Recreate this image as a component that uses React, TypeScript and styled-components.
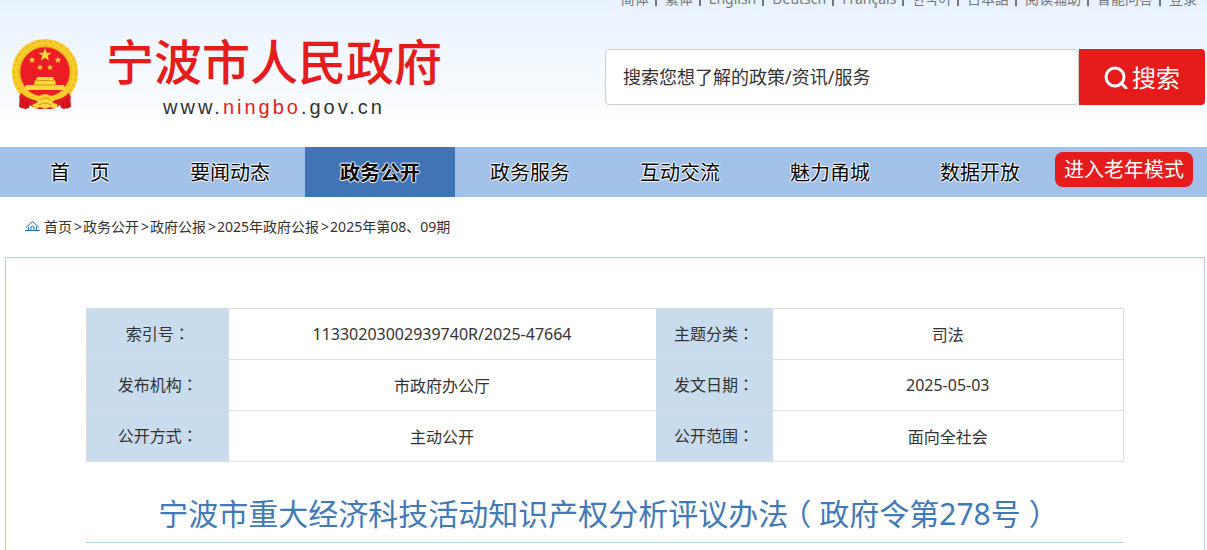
import React from 'react';
import styled, { createGlobalStyle } from 'styled-components';

const GlobalStyle = createGlobalStyle`
  * { box-sizing: border-box; }
  body {
    margin: 0;
    background: #fff;
    color: #333;
    font-family: "Noto Sans", "Noto Sans CJK SC", "Noto Sans CJK KR", sans-serif;
    font-size: 14px;
  }
  a { color: inherit; text-decoration: none; }
  ul, ol { margin: 0; padding: 0; list-style: none; }
`;

const Header = styled.header`
  height: 147px;
  background: linear-gradient(#e8f2ff 0, #fbfdff 114px, #fff 115px);
`;

const TopBar = styled.nav`
  display: flex;
  justify-content: flex-end;
  align-items: flex-end;
  height: 9px;
  padding-right: 10px;
  overflow: hidden;
`;

const TopList = styled.ul`
  display: flex;
  align-items: center;
  color: #777;
  line-height: 20px;
`;

const TopItem = styled.li`
  display: flex;
  align-items: center;
  white-space: nowrap;
  & + &::before {
    content: "";
    width: 2px;
    height: 14px;
    margin: 0 8px 0 6px;
    background: #777;
  }
`;

const Masthead = styled.div`
  display: flex;
  justify-content: space-between;
  gap: 24px;
  padding: 28px 2px 0 11px;
`;

const Brand = styled.a`
  display: flex;
  gap: 27px;
`;

const Emblem = styled.svg`
  flex: none;
  width: 68px;
  height: 76px;
`;

const BrandText = styled.div`
  display: flex;
  flex-direction: column;
  align-items: center;
  white-space: nowrap;
`;

const SiteName = styled.div`
  color: #e61b1b;
  font-family: "Noto Sans CJK SC", sans-serif;
  font-size: 48px;
  font-weight: 500;
  line-height: 44px;
`;

const SiteUrl = styled.div`
  margin-top: 8px;
  color: #333;
  font-family: "Liberation Sans", Arial, sans-serif;
  font-size: 20px;
  letter-spacing: 3px;
  line-height: 36px;
  span { color: #e61b1b; }
`;

const SearchForm = styled.form`
  display: flex;
  flex: 0 1 600px;
  height: 56px;
  margin-top: 12px;
`;

const SearchInput = styled.input`
  flex: 1;
  min-width: 0;
  padding: 0 17px;
  border: 1px solid #ccc;
  border-radius: 4px;
  background: #fff;
  font: inherit;
  font-size: 18px;
  outline: none;
  &::placeholder { color: #333; opacity: 1; }
`;

const SearchButton = styled.button`
  display: flex;
  align-items: center;
  justify-content: center;
  gap: 4px;
  width: 126px;
  padding: 0 0 2px;
  border: 0;
  border-radius: 0 4px 4px 0;
  background: #e61b1b;
  color: #fff;
  font: inherit;
  font-size: 24px;
`;

const SearchIcon = styled.svg`
  margin-top: 2px;
`;

const NavBar = styled.nav`
  display: flex;
  height: 50px;
  padding-left: 5px;
  background: #a2c1e9;
`;

const NavList = styled.ul`
  display: flex;
`;

const NavLink = styled.a<{ $active?: boolean }>`
  display: block;
  width: 150px;
  height: 50px;
  background: ${(p) => (p.$active ? '#4174b5' : 'transparent')};
  color: #000;
  font-size: 20px;
  font-weight: ${(p) => (p.$active ? 700 : 400)};
  line-height: 52px;
  text-align: center;
  white-space: pre;
  text-shadow: 1px 0 1px #fff, -1px 0 1px #fff, 0 1px 1px #fff, 0 -1px 1px #fff;
`;

const SeniorButton = styled.button`
  height: 35px;
  margin-top: 5px;
  padding: 0 9px;
  border: 0;
  border-radius: 8px;
  background: #e61b1b;
  color: #fff;
  font: inherit;
  font-size: 20px;
  line-height: 36px;
  white-space: nowrap;
`;

const Breadcrumb = styled.nav`
  display: flex;
  align-items: center;
  gap: 4px;
  height: 60px;
  padding: 0 0 2px 25px;
`;

const CrumbList = styled.ol`
  display: flex;
`;

const Crumb = styled.li`
  & + &::before { content: ">"; margin: 0 1px 0 2px; }
`;

const Article = styled.main`
  margin: 0 2px 0 5px;
  padding: 50px 80px 40px;
  border: 1px solid #b5cbe6;
`;

const InfoTable = styled.table`
  width: 100%;
  border: 1px solid #ddd;
  border-collapse: collapse;
  table-layout: fixed;
  font-size: 16px;
`;

const LabelCell = styled.th`
  height: 51px;
  padding: 0 0 2px;
  border-bottom: 1px solid #ddd;
  background: #c8dced;
  font-weight: 400;
`;

const ValueCell = styled.td`
  padding: 0 0 1px;
  border-bottom: 1px solid #ddd;
  text-align: center;
`;

const Col = styled.col<{ $width?: string }>`
  width: ${(p) => p.$width ?? 'auto'};
`;

const Title = styled.h1`
  margin: 0;
  padding: 30px 0 8px;
  border-bottom: 1px solid #b9d3e6;
  color: #4279b8;
  font-size: 30px;
  font-weight: 400;
  line-height: 40px;
  text-align: center;
`;

/* Full-width colon centred in its cell */
const Colon = styled.span`
  font-family: "Noto Sans CJK TC", sans-serif;
`;

/* Full-width bracket with its blank half shared between both sides */
const Bracket = styled.span`
  padding: 0 8px;
  font-family: "Noto Sans CJK SC", sans-serif;
  font-feature-settings: "halt";
`;

const languages = ['简体', '繁体', 'English', 'Deutsch', 'Français', '한국어', '日本語', '阅读辅助', '智能问答', '登录'];
const sections = ['首　页', '要闻动态', '政务公开', '政务服务', '互动交流', '魅力甬城', '数据开放'];
const crumbs = ['首页', '政务公开', '政府公报', '2025年政府公报', '2025年第08、09期'];
const info = [
  ['索引号', '11330203002939740R/2025-47664', '主题分类', '司法'],
  ['发布机构', '市政府办公厅', '发文日期', '2025-05-03'],
  ['公开方式', '主动公开', '公开范围', '面向全社会'],
];

const star = (cx: number, cy: number, r: number) =>
  Array.from({ length: 10 }, (_, i) => {
    const a = (Math.PI / 5) * i - Math.PI / 2;
    const d = i % 2 ? r * 0.4 : r;
    return `${(cx + d * Math.cos(a)).toFixed(2)},${(cy + d * Math.sin(a)).toFixed(2)}`;
  }).join(' ');

const NationalEmblem = () => (
  <Emblem viewBox="0 0 68 76" aria-hidden="true">
    <path d="M9 54l-1 16q5 3 10 1l1-3q5 4 10 4h10q5 0 10-4l1 3q5 2 10-1l-1-16z" fill="#df1820" />
    <path d="M34 2C15 2 1 17 1 35c0 11 4 19 10 25q9 7 23 7t23-7c6-6 10-14 10-25C67 17 53 2 34 2z" fill="#f8cd2c" />
    <circle cx="34" cy="35" r="31" fill="none" stroke="#e0a51c" strokeWidth="1" strokeDasharray="3 3" />
    <circle cx="34" cy="35" r="27" fill="none" stroke="#eab822" strokeWidth="1" strokeDasharray="4 2" />
    <circle cx="34" cy="35" r="25" fill="#ed1c24" stroke="#dc8b15" strokeWidth="1" />
    <g fill="#ffd83b">
      <polygon points={star(34, 18, 7)} />
      <polygon points={star(21, 23, 3.6)} />
      <polygon points={star(47, 23, 3.6)} />
      <polygon points={star(29, 30.5, 3.4)} />
      <polygon points={star(39, 30.5, 3.4)} />
      <path d="M26 40h16l1 3H25zM24 43h20l1 5H23zM15 48h38l2 5H13z" />
    </g>
    <path d="M25 43.5h18M22 48h24" stroke="#d9951a" strokeWidth="1" />
    <path d="M17 53h34l-6 4q-4-3-11-3t-11 3z" fill="#ed1c24" />
    <path d="M10 56q10 0 15 8 9 5 18 0 5-8 15-8l2 5q-8 2-13 6-13 3-26 0-5-4-13-6z" fill="#e21a22" />
    <path d="M14 53q10 6 14 6 6-4 12 0 4 0 14-6l3 4q-8 6-15 6h-4l-4-2-4 2h-4q-7 0-15-6z" fill="#f8cd2c" />
    <path d="M21 68l6-3q3-3 7-3t7 3l6 3-3 4-5-2-5 2-5-2-5 2z" fill="#ffd83b" />
    <path d="M29 63q5-4 10 0M28 68q6-4 12 0" fill="none" stroke="#d9951a" strokeWidth="1" />
    <path d="M12 62l-1 9M16 64l-1 8M56 62l1 9M52 64l1 8" stroke="#b01019" strokeWidth="1" />
  </Emblem>
);

export default function App() {
  return (
    <>
      <GlobalStyle />
      <Header>
        <TopBar aria-label="语言">
          <TopList>
            {languages.map((name) => (
              <TopItem key={name}><a href="#">{name}</a></TopItem>
            ))}
          </TopList>
        </TopBar>
        <Masthead>
          <Brand href="#">
            <NationalEmblem />
            <BrandText>
              <SiteName>宁波市人民政府</SiteName>
              <SiteUrl>www.<span>ningbo</span>.gov.cn</SiteUrl>
            </BrandText>
          </Brand>
          <SearchForm role="search" onSubmit={(e) => e.preventDefault()}>
            <SearchInput type="text" aria-label="搜索" placeholder="搜索您想了解的政策/资讯/服务" />
            <SearchButton type="submit">
              <SearchIcon width="24" height="24" viewBox="0 0 24 24" fill="none" stroke="#fff" strokeWidth="3" aria-hidden="true">
                <circle cx="11" cy="12" r="9" />
                <path d="M17 18l5 5" strokeLinecap="round" />
              </SearchIcon>
              搜索
            </SearchButton>
          </SearchForm>
        </Masthead>
      </Header>
      <NavBar>
        <NavList>
          {sections.map((name) => (
            <li key={name}><NavLink href="#" $active={name === '政务公开'}>{name}</NavLink></li>
          ))}
        </NavList>
        <SeniorButton type="button">进入老年模式</SeniorButton>
      </NavBar>
      <Breadcrumb>
        <svg width="15" height="12" viewBox="0 0 15 12" fill="none" stroke="#1a73c8" aria-hidden="true">
          <path d="M1 7.5L7.5 1.5L14 7.5M0 10.5h15M3.5 6.5v4M11.5 6.5v4M6 10.5V7q1.5-2 3 0v3.5" />
        </svg>
        <CrumbList>
          {crumbs.map((name) => (
            <Crumb key={name}><a href="#">{name}</a></Crumb>
          ))}
        </CrumbList>
      </Breadcrumb>
      <Article>
        <InfoTable>
          <colgroup>
            <Col $width="142px" />
            <Col />
            <Col $width="117px" />
            <Col $width="351px" />
          </colgroup>
          <tbody>
            {info.map(([labelA, valueA, labelB, valueB]) => (
              <tr key={labelA}>
                <LabelCell scope="row">{labelA}<Colon>：</Colon></LabelCell>
                <ValueCell>{valueA}</ValueCell>
                <LabelCell scope="row">{labelB}<Colon>：</Colon></LabelCell>
                <ValueCell>{valueB}</ValueCell>
              </tr>
            ))}
          </tbody>
        </InfoTable>
        <Title>
          宁波市重大经济科技活动知识产权分析评议办法<Bracket>（</Bracket>政府令第278号<Bracket>）</Bracket>
        </Title>
      </Article>
    </>
  );
}
